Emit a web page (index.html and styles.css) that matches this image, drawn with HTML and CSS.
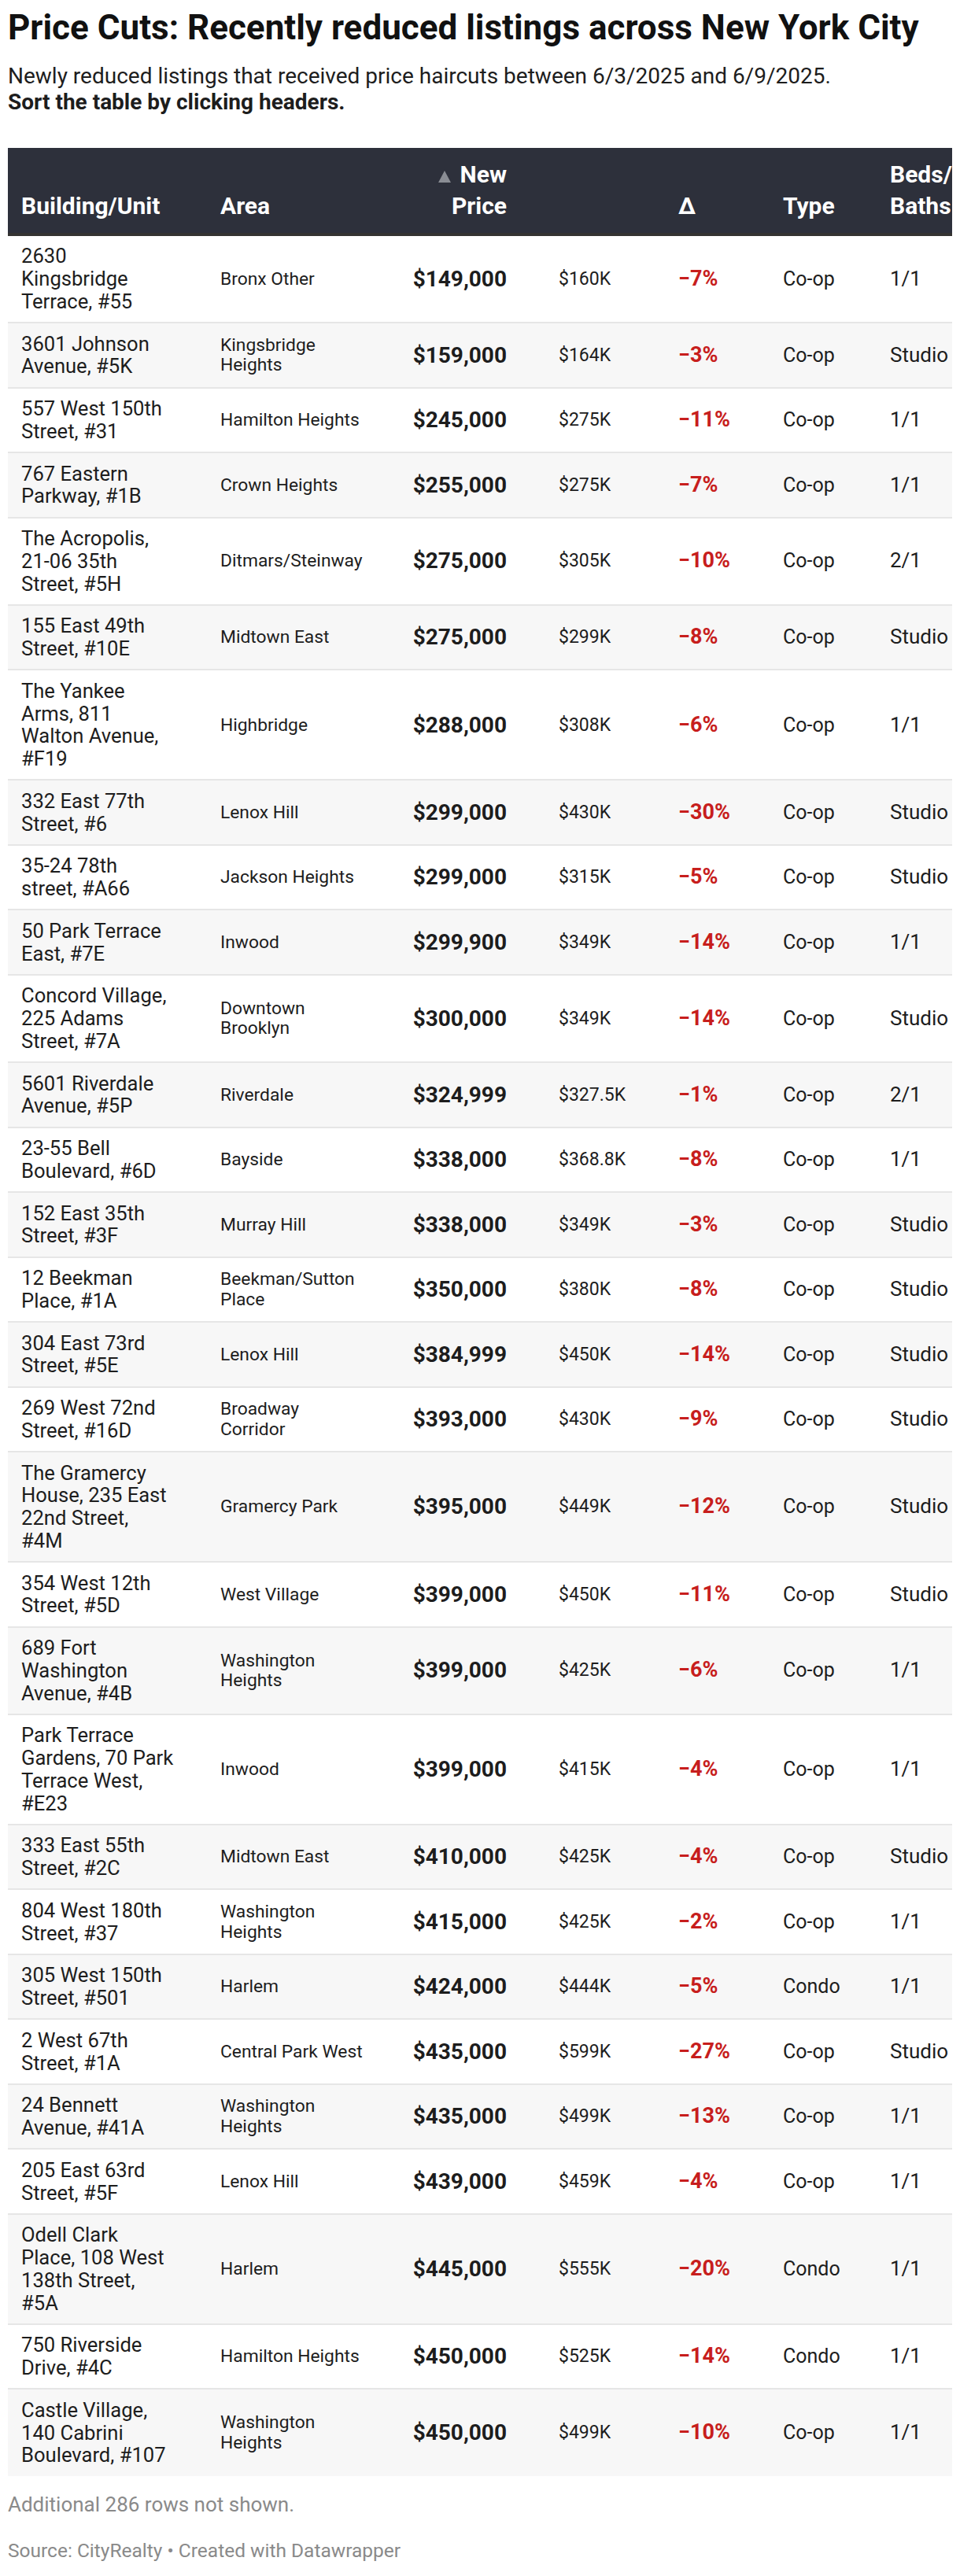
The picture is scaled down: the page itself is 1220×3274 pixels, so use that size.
FILE: index.html
```html
<!DOCTYPE html>
<html lang="en">
<head>
<meta charset="utf-8">
<title>Price Cuts</title>
<link rel="stylesheet" href="styles.css">
</head>
<body>
<div class="chart">
  <h1 class="title">Price Cuts: Recently reduced listings across New York City</h1>
  <p class="desc">Newly reduced listings that received price haircuts between 6/3/2025 and 6/9/2025.<br><strong>Sort the table by clicking headers.</strong></p>
  <div class="table-wrap">
    <table class="tbl">
      <colgroup>
        <col class="c1"><col class="c2"><col class="c3"><col class="c4"><col class="c5"><col class="c6"><col class="c7">
      </colgroup>
      <thead>
        <tr>
          <th class="name">Building/Unit</th>
          <th class="area">Area</th>
          <th class="price"><svg class="sort" width="16" height="15" viewBox="0 0 16 15"><polygon points="0,15 8,0 16,15" fill="#8a8d94"/></svg>New<br>Price</th>
          <th class="old"></th>
          <th class="delta">Δ</th>
          <th class="type">Type</th>
          <th class="beds">Beds/<br>Baths</th>
        </tr>
      </thead>
      <tbody>
        <tr><td class="name">2630 Kingsbridge Terrace, #55</td><td class="area">Bronx Other</td><td class="price">$149,000</td><td class="old">$160K</td><td class="delta">−7%</td><td class="type">Co-op</td><td class="beds">1/1</td></tr>
        <tr><td class="name">3601 Johnson Avenue, #5K</td><td class="area">Kingsbridge Heights</td><td class="price">$159,000</td><td class="old">$164K</td><td class="delta">−3%</td><td class="type">Co-op</td><td class="beds">Studio</td></tr>
        <tr><td class="name">557 West 150th Street, #31</td><td class="area">Hamilton Heights</td><td class="price">$245,000</td><td class="old">$275K</td><td class="delta">−11%</td><td class="type">Co-op</td><td class="beds">1/1</td></tr>
        <tr><td class="name">767 Eastern Parkway, #1B</td><td class="area">Crown Heights</td><td class="price">$255,000</td><td class="old">$275K</td><td class="delta">−7%</td><td class="type">Co-op</td><td class="beds">1/1</td></tr>
        <tr><td class="name">The Acropolis, 21-06 35th Street, #5H</td><td class="area">Ditmars/Steinway</td><td class="price">$275,000</td><td class="old">$305K</td><td class="delta">−10%</td><td class="type">Co-op</td><td class="beds">2/1</td></tr>
        <tr><td class="name">155 East 49th Street, #10E</td><td class="area">Midtown East</td><td class="price">$275,000</td><td class="old">$299K</td><td class="delta">−8%</td><td class="type">Co-op</td><td class="beds">Studio</td></tr>
        <tr><td class="name">The Yankee Arms, 811 Walton Avenue, #F19</td><td class="area">Highbridge</td><td class="price">$288,000</td><td class="old">$308K</td><td class="delta">−6%</td><td class="type">Co-op</td><td class="beds">1/1</td></tr>
        <tr><td class="name">332 East 77th Street, #6</td><td class="area">Lenox Hill</td><td class="price">$299,000</td><td class="old">$430K</td><td class="delta">−30%</td><td class="type">Co-op</td><td class="beds">Studio</td></tr>
        <tr><td class="name">35-24 78th street, #A66</td><td class="area">Jackson Heights</td><td class="price">$299,000</td><td class="old">$315K</td><td class="delta">−5%</td><td class="type">Co-op</td><td class="beds">Studio</td></tr>
        <tr><td class="name">50 Park Terrace East, #7E</td><td class="area">Inwood</td><td class="price">$299,900</td><td class="old">$349K</td><td class="delta">−14%</td><td class="type">Co-op</td><td class="beds">1/1</td></tr>
        <tr><td class="name">Concord Village, 225 Adams Street, #7A</td><td class="area">Downtown Brooklyn</td><td class="price">$300,000</td><td class="old">$349K</td><td class="delta">−14%</td><td class="type">Co-op</td><td class="beds">Studio</td></tr>
        <tr><td class="name">5601 Riverdale Avenue, #5P</td><td class="area">Riverdale</td><td class="price">$324,999</td><td class="old">$327.5K</td><td class="delta">−1%</td><td class="type">Co-op</td><td class="beds">2/1</td></tr>
        <tr><td class="name">23-55 Bell Boulevard, #6D</td><td class="area">Bayside</td><td class="price">$338,000</td><td class="old">$368.8K</td><td class="delta">−8%</td><td class="type">Co-op</td><td class="beds">1/1</td></tr>
        <tr><td class="name">152 East 35th Street, #3F</td><td class="area">Murray Hill</td><td class="price">$338,000</td><td class="old">$349K</td><td class="delta">−3%</td><td class="type">Co-op</td><td class="beds">Studio</td></tr>
        <tr><td class="name">12 Beekman Place, #1A</td><td class="area">Beekman/Sutton Place</td><td class="price">$350,000</td><td class="old">$380K</td><td class="delta">−8%</td><td class="type">Co-op</td><td class="beds">Studio</td></tr>
        <tr><td class="name">304 East 73rd Street, #5E</td><td class="area">Lenox Hill</td><td class="price">$384,999</td><td class="old">$450K</td><td class="delta">−14%</td><td class="type">Co-op</td><td class="beds">Studio</td></tr>
        <tr><td class="name">269 West 72nd Street, #16D</td><td class="area">Broadway Corridor</td><td class="price">$393,000</td><td class="old">$430K</td><td class="delta">−9%</td><td class="type">Co-op</td><td class="beds">Studio</td></tr>
        <tr><td class="name">The Gramercy House, 235 East 22nd Street, #4M</td><td class="area">Gramercy Park</td><td class="price">$395,000</td><td class="old">$449K</td><td class="delta">−12%</td><td class="type">Co-op</td><td class="beds">Studio</td></tr>
        <tr><td class="name">354 West 12th Street, #5D</td><td class="area">West Village</td><td class="price">$399,000</td><td class="old">$450K</td><td class="delta">−11%</td><td class="type">Co-op</td><td class="beds">Studio</td></tr>
        <tr><td class="name">689 Fort Washington Avenue, #4B</td><td class="area">Washington Heights</td><td class="price">$399,000</td><td class="old">$425K</td><td class="delta">−6%</td><td class="type">Co-op</td><td class="beds">1/1</td></tr>
        <tr><td class="name">Park Terrace Gardens, 70 Park Terrace West, #E23</td><td class="area">Inwood</td><td class="price">$399,000</td><td class="old">$415K</td><td class="delta">−4%</td><td class="type">Co-op</td><td class="beds">1/1</td></tr>
        <tr><td class="name">333 East 55th Street, #2C</td><td class="area">Midtown East</td><td class="price">$410,000</td><td class="old">$425K</td><td class="delta">−4%</td><td class="type">Co-op</td><td class="beds">Studio</td></tr>
        <tr><td class="name">804 West 180th Street, #37</td><td class="area">Washington Heights</td><td class="price">$415,000</td><td class="old">$425K</td><td class="delta">−2%</td><td class="type">Co-op</td><td class="beds">1/1</td></tr>
        <tr><td class="name">305 West 150th Street, #501</td><td class="area">Harlem</td><td class="price">$424,000</td><td class="old">$444K</td><td class="delta">−5%</td><td class="type">Condo</td><td class="beds">1/1</td></tr>
        <tr><td class="name">2 West 67th Street, #1A</td><td class="area">Central Park West</td><td class="price">$435,000</td><td class="old">$599K</td><td class="delta">−27%</td><td class="type">Co-op</td><td class="beds">Studio</td></tr>
        <tr><td class="name">24 Bennett Avenue, #41A</td><td class="area">Washington Heights</td><td class="price">$435,000</td><td class="old">$499K</td><td class="delta">−13%</td><td class="type">Co-op</td><td class="beds">1/1</td></tr>
        <tr><td class="name">205 East 63rd Street, #5F</td><td class="area">Lenox Hill</td><td class="price">$439,000</td><td class="old">$459K</td><td class="delta">−4%</td><td class="type">Co-op</td><td class="beds">1/1</td></tr>
        <tr><td class="name">Odell Clark Place, 108 West 138th Street, #5A</td><td class="area">Harlem</td><td class="price">$445,000</td><td class="old">$555K</td><td class="delta">−20%</td><td class="type">Condo</td><td class="beds">1/1</td></tr>
        <tr><td class="name">750 Riverside Drive, #4C</td><td class="area">Hamilton Heights</td><td class="price">$450,000</td><td class="old">$525K</td><td class="delta">−14%</td><td class="type">Condo</td><td class="beds">1/1</td></tr>
        <tr><td class="name">Castle Village, 140 Cabrini Boulevard, #107</td><td class="area">Washington Heights</td><td class="price">$450,000</td><td class="old">$499K</td><td class="delta">−10%</td><td class="type">Co-op</td><td class="beds">1/1</td></tr>
      </tbody>
    </table>
  </div>
  <p class="more">Additional 286 rows not shown.</p>
  <p class="source">Source: CityRealty • Created with Datawrapper</p>
</div>
</body>
</html>
```

FILE: styles.css
```css
html, body {
  margin: 0;
  padding: 0;
  background: #ffffff;
}

body {
  font-family: Roboto, "Liberation Sans", Arial, sans-serif;
  color: #1d1d1d;
}

.chart {
  padding: 9px 10px 0 10px;
}

.title {
  margin: 0;
  font-size: 44px;
  line-height: 1.2;
  font-weight: 700;
  color: #111111;
}

.desc {
  margin: 18px 0 0 0;
  font-size: 28px;
  line-height: 33px;
  color: #1d1d1d;
}

.desc strong {
  font-weight: 700;
}

.table-wrap {
  margin-top: 42px;
  width: 1200px;
  overflow: hidden;
}

.tbl {
  border-collapse: collapse;
  table-layout: fixed;
  width: 1300px;
}

.c1 { width: 253px; }
.c2 { width: 217px; }
.c3 { width: 213px; }
.c4 { width: 152px; }
.c5 { width: 133px; }
.c6 { width: 136px; }
.c7 { width: 196px; }

.tbl thead tr {
  background: #2d303b;
  border-bottom: 4px solid #343331;
}

.tbl th {
  color: #ffffff;
  font-size: 30px;
  font-weight: 700;
  line-height: 40px;
  text-align: left;
  vertical-align: bottom;
  padding: 14px 17px;
  white-space: nowrap;
}

.tbl th.price {
  text-align: right;
  padding-right: 49px;
}

.sort {
  display: inline-block;
  vertical-align: baseline;
  margin-right: 12px;
}

.tbl td {
  padding: 11.5px 17px;
  vertical-align: middle;
  font-size: 22px;
  line-height: 25.6px;
  color: #1d1d1d;
}

.tbl tbody tr {
  border-bottom: 2px solid #e6e6e6;
}

.tbl tbody tr:nth-child(even) {
  background: #f7f7f7;
}

.tbl tbody tr:last-child {
  border-bottom: none;
}

.tbl td.name {
  font-size: 25.6px;
  line-height: 28.75px;
  padding-right: 42px;
}

.tbl td.area {
  font-size: 22.8px;
  padding-right: 15px;
}

.tbl td.price {
  text-align: right;
  font-weight: 700;
  font-size: 28px;
  padding-right: 49px;
}

.tbl td.old {
  font-size: 23px;
}

.tbl td.delta {
  color: #c71e1d;
  font-weight: 700;
  font-size: 27px;
}

.tbl td.type {
  font-size: 25px;
}

.tbl td.beds {
  font-size: 26px;
}

.more {
  margin: 20px 0 0 0;
  font-size: 26px;
  line-height: 33px;
  color: #8a8a8a;
}

.source {
  margin: 27px 0 0 0;
  font-size: 24.5px;
  line-height: 30px;
  color: #8a8a8a;
}
```
